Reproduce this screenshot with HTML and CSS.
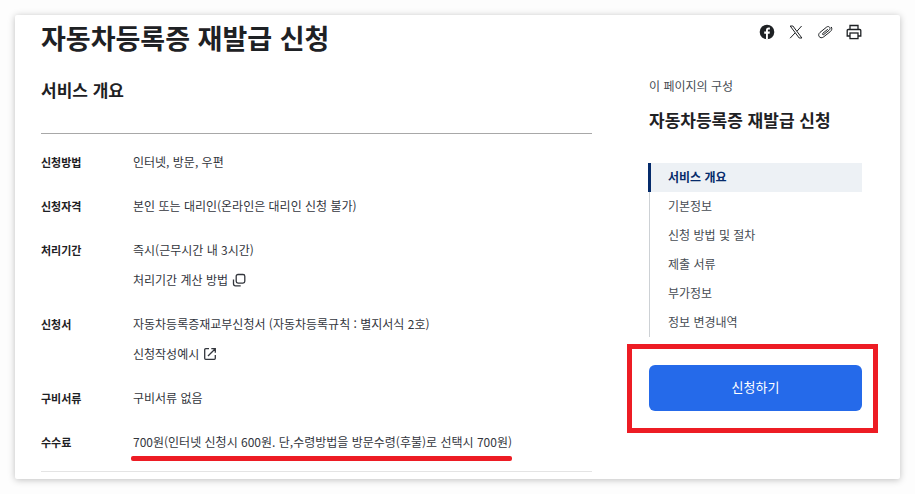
FILE: index.html
```
<!DOCTYPE html>
<html lang="ko">
<head>
    <meta charset="UTF-8">
    <meta name="viewport" content="width=device-width, initial-scale=1.0">
    <title>자동차등록증 재발급 신청</title>
    <link rel="stylesheet" href="styles.css">
</head>
<body>
    <div class="card">
        <main class="content">
            <h1 class="page-title">자동차등록증 재발급 신청</h1>
            <h2 class="section-title">서비스 개요</h2>
            <dl class="info">
                <div class="row">
                    <dt>신청방법</dt>
                    <dd>인터넷, 방문, 우편</dd>
                </div>
                <div class="row">
                    <dt>신청자격</dt>
                    <dd>본인 또는 대리인(온라인은 대리인 신청 불가)</dd>
                </div>
                <div class="row">
                    <dt>처리기간</dt>
                    <dd>즉시(근무시간 내 3시간)
                        <button type="button" class="more">처리기간 계산 방법
                            <svg class="more-icon" viewBox="0 0 14 14"><rect x="4.2" y="1.5" width="8.6" height="8.6" rx="1.8"/><path d="M1.5 6.5v4.3a2 2 0 0 0 2 2h5.2"/></svg>
                        </button>
                    </dd>
                </div>
                <div class="row">
                    <dt>신청서</dt>
                    <dd>자동차등록증재교부신청서 (자동차등록규칙 : 별지서식 2호)
                        <a href="#" class="more">신청작성예시
                            <svg class="more-icon" viewBox="0 0 14 14"><path d="M6 1.7H2.7a1 1 0 0 0-1 1v8.6a1 1 0 0 0 1 1h8.6a1 1 0 0 0 1-1V8M8.3 1.7h4v4M12.3 1.7L5 9"/></svg>
                        </a>
                    </dd>
                </div>
                <div class="row">
                    <dt>구비서류</dt>
                    <dd>구비서류 없음</dd>
                </div>
                <div class="row">
                    <dt>수수료</dt>
                    <dd><span class="marked">700원(인터넷 신청시 600원. 단,수령방법을 방문수령(후불)로 선택시 700원)</span></dd>
                </div>
            </dl>
        </main>

        <aside class="side">
            <div class="share">
                <button type="button" aria-label="페이스북">
                    <svg viewBox="0 0 16 16"><circle cx="8" cy="8" r="7.3" fill="#1e2124"/><path d="M7 15.5V9.7H5.2V7.6H7V6.2c0-1.9 1-2.8 2.6-2.8.6 0 1.1.1 1.3.1v1.9h-1c-.8 0-1 .4-1 1v1.2h2l-.3 2.1H8.9v5.8z" fill="#fff"/></svg>
                </button>
                <button type="button" aria-label="X">
                    <svg viewBox="0 0 16 16" fill="none" stroke="#1e2124"><path d="M2.2 2h2.7l9 12h-2.7zM13.6 2L9 7.2M7 9l-4.9 5.2"/></svg>
                </button>
                <button type="button" aria-label="링크 복사">
                    <svg viewBox="0 0 16 16" fill="none" stroke="#1e2124" stroke-linecap="round"><path d="M10.5 5.5L5.8 9.3c-.9.8.1 1.900 1 1.200l5.400-4.400c2.200-1.900-.3-4.800-2.600-3L3 8.400c-3.300 2.800.1 7.200 3.600 4.500l6.700-5.300c1.600-1.300 1.900-3 1.200-4.300"/></svg>
                </button>
                <button type="button" aria-label="인쇄">
                    <svg viewBox="0 0 16 16" fill="none" stroke="#1e2124" stroke-width="1.3"><path d="M4 5.5V1.5h8v4M4 12H1.2V6.5a1 1 0 0 1 1-1h11.6a1 1 0 0 1 1 1V12H12"/><rect x="4" y="9" width="8" height="5.6"/></svg>
                </button>
            </div>
            <p class="side-label">이 페이지의 구성</p>
            <h2 class="side-title">자동차등록증 재발급 신청</h2>
            <nav class="toc">
                <a href="#" class="active">서비스 개요</a>
                <a href="#">기본정보</a>
                <a href="#">신청 방법 및 절차</a>
                <a href="#">제출 서류</a>
                <a href="#">부가정보</a>
                <a href="#">정보 변경내역</a>
            </nav>
            <div class="apply-box">
                <button type="button" class="apply">신청하기</button>
            </div>
        </aside>
    </div>
</body>
</html>
```
FILE: styles.css
```
* {
    box-sizing: border-box;
}
body {
    margin: 0;
    padding: 15px;
    background-color: #fdfdfd;
    color: #1e2124;
    font-family: "Noto Sans CJK KR", sans-serif;
    font-size: 12px;
    line-height: 20px;
}
h1, h2, p, dl, dd {
    margin: 0;
}
button {
    padding: 0;
    border: none;
    background: none;
    color: inherit;
    font: inherit;
    cursor: pointer;
}
a {
    color: inherit;
    text-decoration: none;
}
.card {
    display: grid;
    grid-template-columns: 1fr 213px;
    gap: 57px;
    padding: 0 38px 7px 26px;
    background-color: #fff;
    border-radius: 2px;
    box-shadow: 0 1px 7px rgba(0, 0, 0, 0.25);
}
.page-title {
    padding-top: 3px;
    font-size: 27px;
    line-height: 40px;
}
.section-title {
    padding: 20px 0 31px;
    font-size: 17px;
    line-height: 24px;
}
.info {
    padding: 6px 0 7px;
    border-top: 1px solid #a8a8a8;
    border-bottom: 1px solid #e4e4e4;
}
.row {
    display: flex;
    padding: 12px 0;
}
.row dt {
    width: 92px;
    font-size: 11px;
    font-weight: bold;
}
.row dd {
    flex: 1;
    color: #33363d;
}
.more {
    display: flex;
    align-items: center;
    gap: 4px;
    margin-top: 10px;
}
.more-icon {
    width: 14px;
    height: 14px;
    fill: none;
    stroke: #33363d;
    stroke-width: 1.3;
}
.marked {
    position: relative;
}
.marked::after {
    content: "";
    position: absolute;
    left: -2px;
    right: 0;
    bottom: -11px;
    height: 5px;
    border-radius: 2px;
    background-color: #ed1c24;
}
.share {
    display: flex;
    justify-content: flex-end;
    gap: 13px;
    padding-top: 9px;
}
.share button,
.share svg {
    display: block;
    width: 16px;
    height: 16px;
}
.side-label {
    padding-top: 36px;
    color: #464c53;
}
.side-title {
    padding: 12px 0 31px;
    font-size: 17px;
    line-height: 24px;
}
.toc {
    border-left: 1px solid #cdd1d5;
}
.toc a {
    display: block;
    padding: 4px 0 5px 18px;
    color: #464c53;
}
.toc .active {
    margin-left: -2px;
    padding-left: 17px;
    border-left: 3px solid #052b6b;
    background-color: #edf1f5;
    color: #052b6b;
    font-weight: bold;
}
.apply-box {
    margin: 7px -16px 0 -22px;
    padding: 16px 11px 17px 17px;
    border: 5px solid #ed1c24;
}
.apply {
    width: 100%;
    height: 46px;
    padding-bottom: 2px;
    border-radius: 6px;
    background-color: #256aea;
    color: #fff;
    font-size: 13px;
}
```
